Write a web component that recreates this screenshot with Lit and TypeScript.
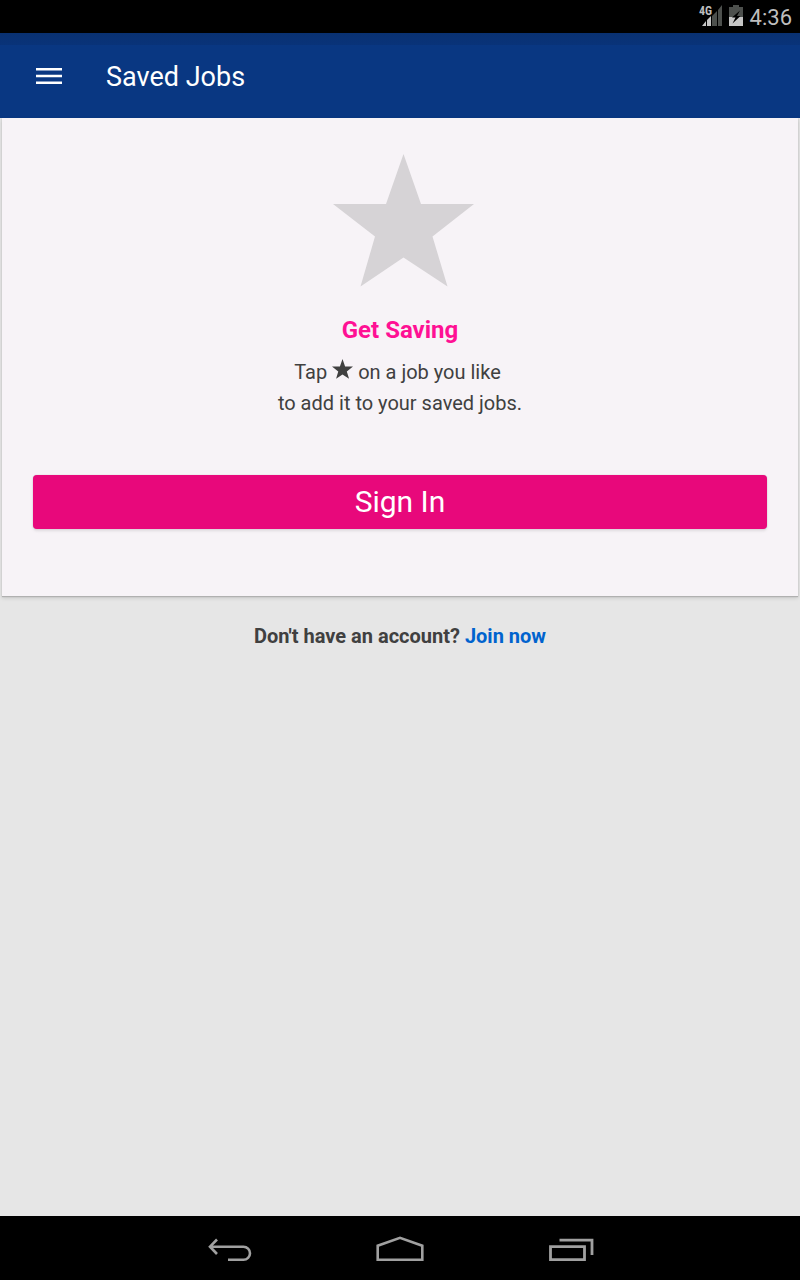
import { LitElement, html, css } from "lit";
import { customElement } from "lit/decorators.js";

const STAR = "M70.5 0 L88 50 H141 L99.500 82.500 L114.500 132.500 L70.500 103.500 L27.500 132.500 L42 82.500 L0 50 H53 Z";

@customElement("app-root")
export class AppRoot extends LitElement {
  static styles = css`
    :host {
      display: flex;
      flex-direction: column;
      min-height: 100vh;
      background: #e6e6e6;
      color: #404040;
      font-family: Roboto, sans-serif;
      font-size: 20px;
    }
    svg { display: block; }
    button {
      border: 0;
      padding: 0;
      background: none;
      color: inherit;
      font: inherit;
      cursor: pointer;
    }
    .status {
      display: flex;
      justify-content: flex-end;
      height: 33px;
      padding-right: 8px;
      background: #000;
      color: #bebebe;
      font-size: 22px;
      line-height: 35px;
    }
    .network { font: bold 12px "Roboto Condensed", "Liberation Sans Narrow", Roboto, sans-serif; }
    .toolbar {
      display: flex;
      align-items: center;
      gap: 44px;
      height: 85px;
      padding: 0 36px;
      background: linear-gradient(#093172, #093379 12px, #093782 12px);
      color: #fff;
    }
    h1 {
      margin: 0;
      font-size: 27px;
      font-weight: 400;
      line-height: 34px;
      padding-top: 2px;
    }
    .card {
      display: flex;
      flex-direction: column;
      align-items: center;
      margin: 0 2px;
      padding: 36px 31px 67px;
      background: #f7f3f7;
      box-shadow: 0 1px 1px #b0b0b0, 0 2px 4px rgba(0, 0, 0, 0.14);
    }
    .big-star { margin-left: 7px; }
    h2 {
      margin: 28px 0 0;
      color: #ff1094;
      font-size: 24px;
      font-weight: 700;
      line-height: 30px;
    }
    .hint {
      margin: 12px 0 0;
      text-align: center;
      line-height: 31px;
    }
    .small-star { display: inline-block; }
    .sign-in {
      width: 100%;
      height: 54px;
      margin-top: 56px;
      border-radius: 4px;
      background: #e8087b;
      box-shadow: 0 0 1px #b8a0b0, 0 2px 3px rgba(0, 0, 0, 0.1);
      color: #fff;
      font-size: 30px;
      line-height: 54px;
    }
    .join {
      flex: 1;
      margin: 25px 0 0;
      text-align: center;
      font-weight: 700;
      line-height: 30px;
    }
    a { color: #0063ce; text-decoration: none; }
    .nav {
      display: flex;
      justify-content: center;
      gap: 122px;
      height: 64px;
      background: #000;
    }
  `;

  render() {
    return html`
      <div class="status">
        <svg width="54" height="33" viewBox="696 0 54 33" aria-hidden="true">
          <path fill="#4d504d" d="M712 16 L717 11 V26 H712Z M718 10 L722 5 V26 H718Z"/>
          <path fill="#c6c6c6" d="M702 26 L706 21 V26Z M707 20 L711 16 V26 H707Z"/>
          <text class="network" x="699" y="15" fill="#bebebe">4G</text>
          <path fill="#4d504d" d="M733 5 H739 V7 H743 V17 H729 V7 H733Z"/>
          <path fill="#c6c6c6" d="M729 17 H743 V26 H729Z"/>
          <path fill="#000" d="M740 10.500 L732 17.500 H735.500 L732.500 23.500 L740.500 16 H737Z"/>
        </svg>
        <span>4:36</span>
      </div>
      <header class="toolbar">
        <button aria-label="Open menu">
          <svg width="26" height="16" viewBox="0 0 26 16" fill="#fff">
            <path d="M0 0H26V2.500H0Z M0 6.700H26V9.200H0Z M0 13.400H26V16H0Z"/>
          </svg>
        </button>
        <h1>Saved Jobs</h1>
      </header>
      <main class="card">
        <svg class="big-star" width="141" height="133" viewBox="0 0 141 133" aria-hidden="true">
          <path fill="#d6d3d6" d=${STAR}/>
        </svg>
        <h2>Get Saving</h2>
        <p class="hint">
          Tap
          <svg class="small-star" width="21" height="20" viewBox="0 0 141 133" role="img" aria-label="star">
            <path fill="#404040" d=${STAR}/>
          </svg>
          on a job you like&nbsp;<br />to add it to your saved jobs.
        </p>
        <button class="sign-in">Sign In</button>
      </main>
      <p class="join">Don't have an account? <a href="#join">Join now</a></p>
      <nav class="nav">
        <button aria-label="Back">
          <svg width="48" height="64" viewBox="206 1216 48 64" fill="none" stroke="#a0a0a0" stroke-width="2.600">
            <path d="M217 1239.500 L210 1246.700 L217 1254 M210 1246.700 H243.500 A6.500 6.500 0 0 1 243.500 1259.700 H228"/>
          </svg>
        </button>
        <button aria-label="Home">
          <svg width="48" height="64" viewBox="376 1216 48 64" fill="none" stroke="#a0a0a0" stroke-width="2.600">
            <path d="M377.700 1259.700 V1245.700 L400 1237.800 L422.300 1245.700 V1259.700Z"/>
          </svg>
        </button>
        <button aria-label="Recent apps">
          <svg width="48" height="64" viewBox="546 1216 48 64" fill="none" stroke="#a0a0a0" stroke-width="2.800">
            <path d="M550.500 1246.700 H584.500 V1259.700 H550.500Z M559.500 1240.200 H592 V1255"/>
          </svg>
        </button>
      </nav>
    `;
  }
}
